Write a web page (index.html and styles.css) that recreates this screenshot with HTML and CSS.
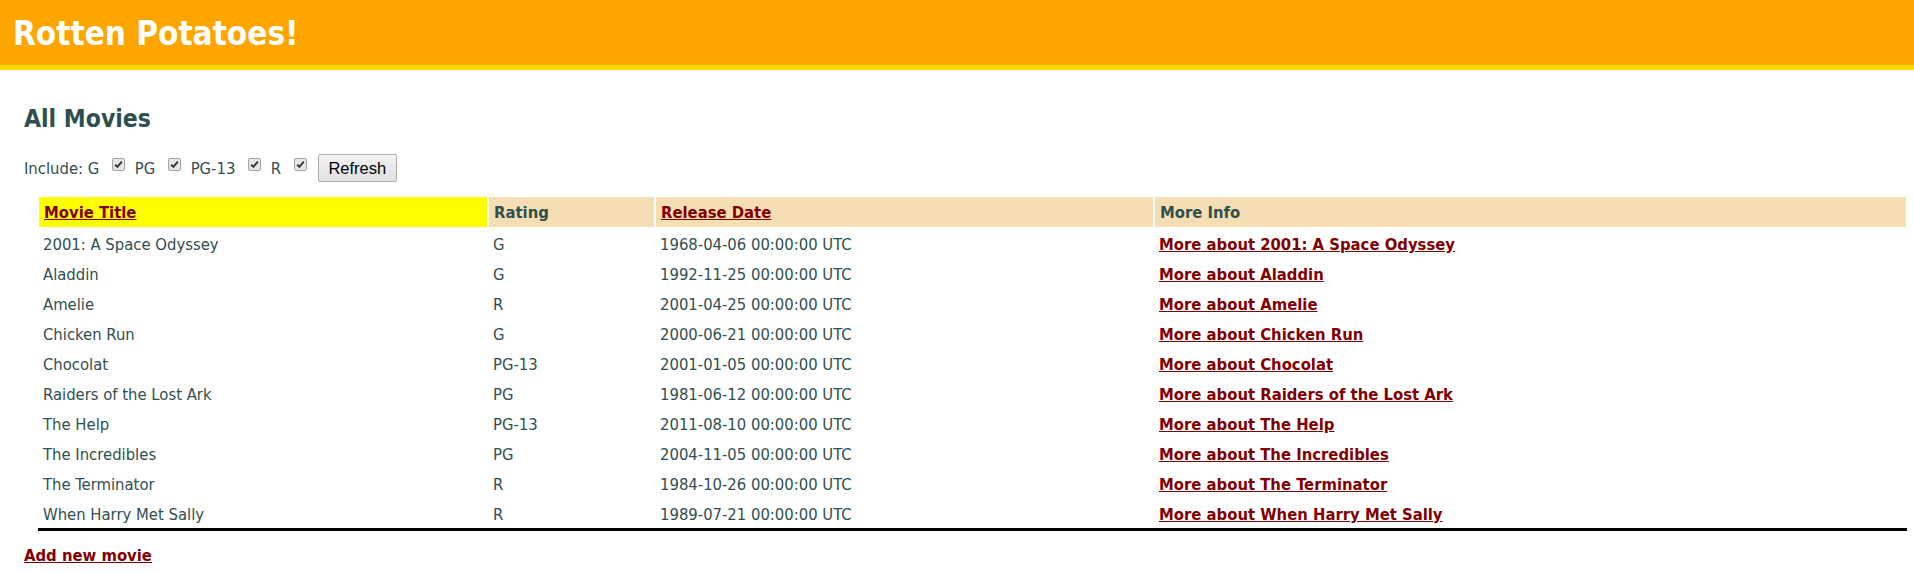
FILE: index.html
```html
<!DOCTYPE html>
<html>
<head>
<meta charset="utf-8">
<title>Rotten Potatoes!</title>
<link rel="stylesheet" href="styles.css">
</head>
<body>
<h1 class="title">Rotten Potatoes!</h1>
<div class="main">
  <h2 class="page-title">All Movies</h2>
  <form class="filters">
    Include:
    <span class="rating">G</span> <input type="checkbox" class="cb" checked>
    <span class="rating">PG</span> <input type="checkbox" class="cb" checked>
    <span class="rating">PG-13</span> <input type="checkbox" class="cb" checked>
    <span class="rating">R</span> <input type="checkbox" class="cb" checked><button type="button" class="refresh">Refresh</button>
  </form>
  <table class="movies">
    <colgroup>
      <col class="c-title">
      <col class="c-rating">
      <col class="c-date">
      <col class="c-info">
    </colgroup>
    <thead>
      <tr>
        <th class="hilite"><a href="#">Movie Title</a></th>
        <th>Rating</th>
        <th><a href="#">Release Date</a></th>
        <th>More Info</th>
      </tr>
    </thead>
    <tbody>
      <tr><td>2001: A Space Odyssey</td><td>G</td><td>1968-04-06 00:00:00 UTC</td><td><a href="#">More about 2001: A Space Odyssey</a></td></tr>
      <tr><td>Aladdin</td><td>G</td><td>1992-11-25 00:00:00 UTC</td><td><a href="#">More about Aladdin</a></td></tr>
      <tr><td>Amelie</td><td>R</td><td>2001-04-25 00:00:00 UTC</td><td><a href="#">More about Amelie</a></td></tr>
      <tr><td>Chicken Run</td><td>G</td><td>2000-06-21 00:00:00 UTC</td><td><a href="#">More about Chicken Run</a></td></tr>
      <tr><td>Chocolat</td><td>PG-13</td><td>2001-01-05 00:00:00 UTC</td><td><a href="#">More about Chocolat</a></td></tr>
      <tr><td>Raiders of the Lost Ark</td><td>PG</td><td>1981-06-12 00:00:00 UTC</td><td><a href="#">More about Raiders of the Lost Ark</a></td></tr>
      <tr><td>The Help</td><td>PG-13</td><td>2011-08-10 00:00:00 UTC</td><td><a href="#">More about The Help</a></td></tr>
      <tr><td>The Incredibles</td><td>PG</td><td>2004-11-05 00:00:00 UTC</td><td><a href="#">More about The Incredibles</a></td></tr>
      <tr><td>The Terminator</td><td>R</td><td>1984-10-26 00:00:00 UTC</td><td><a href="#">More about The Terminator</a></td></tr>
      <tr><td>When Harry Met Sally</td><td>R</td><td>1989-07-21 00:00:00 UTC</td><td><a href="#">More about When Harry Met Sally</a></td></tr>
    </tbody>
  </table>
  <a href="#" class="add-link">Add new movie</a>
</div>
</body>
</html>
```

FILE: styles.css
```css
html, body {
  margin: 0;
  padding: 0;
  background: #ffffff;
  color: #2f4f4f;
  font-family: "DejaVu Sans Condensed", "DejaVu Sans", sans-serif;
  font-stretch: condensed;
  font-size: 16.5px;
}

a {
  color: #800000;
  font-weight: bold;
  text-decoration: underline;
}

.title {
  margin: 0;
  padding: 14px 13px 11px;
  background: #ffa500;
  color: #ffffff;
  border-bottom: 5px solid #ffd700;
  font-size: 33px;
  line-height: 40px;
  font-weight: bold;
}

.main {
  padding: 0 0 20px 24px;
}

.page-title {
  margin: 34px 0 0;
  font-size: 24.5px;
  line-height: 30px;
  font-weight: bold;
}

.filters {
  margin: 0;
  padding-top: 20px;
  line-height: 20px;
  height: 42px;
}

.cb {
  appearance: none;
  -webkit-appearance: none;
  width: 13px;
  height: 13px;
  margin: 0 5px 3px 8px;
  vertical-align: baseline;
  border: 1px solid #a3a3a3;
  border-radius: 2px;
  background: #e6e6e6 url("data:image/svg+xml,%3Csvg xmlns='http://www.w3.org/2000/svg' viewBox='0 0 11 11'%3E%3Cpath d='M2.2 5.6l2.2 2.2 4.4-5.2' fill='none' stroke='%23333' stroke-width='1.9'/%3E%3C/svg%3E") center / 11px 11px no-repeat;
  box-sizing: border-box;
}

.refresh {
  margin-left: 6px;
  width: 79px;
  height: 28px;
  padding: 0;
  font-family: "Liberation Sans", Arial, sans-serif;
  font-size: 16.5px;
  color: #000000;
  background: linear-gradient(#f3f3f3, #e0e0e0);
  border: 1px solid #adadad;
  border-radius: 2px;
  vertical-align: baseline;
}

.movies {
  margin: 0 0 0 14px;
  border-spacing: 0;
  border-collapse: separate;
  table-layout: fixed;
  width: 1869px;
  border-bottom: 3px solid #000000;
}

.c-title { width: 450px; }
.c-rating { width: 167px; }
.c-date { width: 499px; }
.c-info { width: 753px; }

.movies th {
  border: 1px solid #ffffff;
  background: #f5deb3;
  font-weight: bold;
  text-align: left;
  padding: 6px 5px 4px;
  line-height: 20px;
}

.movies th.hilite {
  background: #ffff00;
}

.movies td {
  padding: 7px 5px 3px;
  line-height: 20px;
  text-align: left;
  white-space: nowrap;
}

.add-link {
  display: inline-block;
  margin-top: 15px;
  line-height: 20px;
}
```
